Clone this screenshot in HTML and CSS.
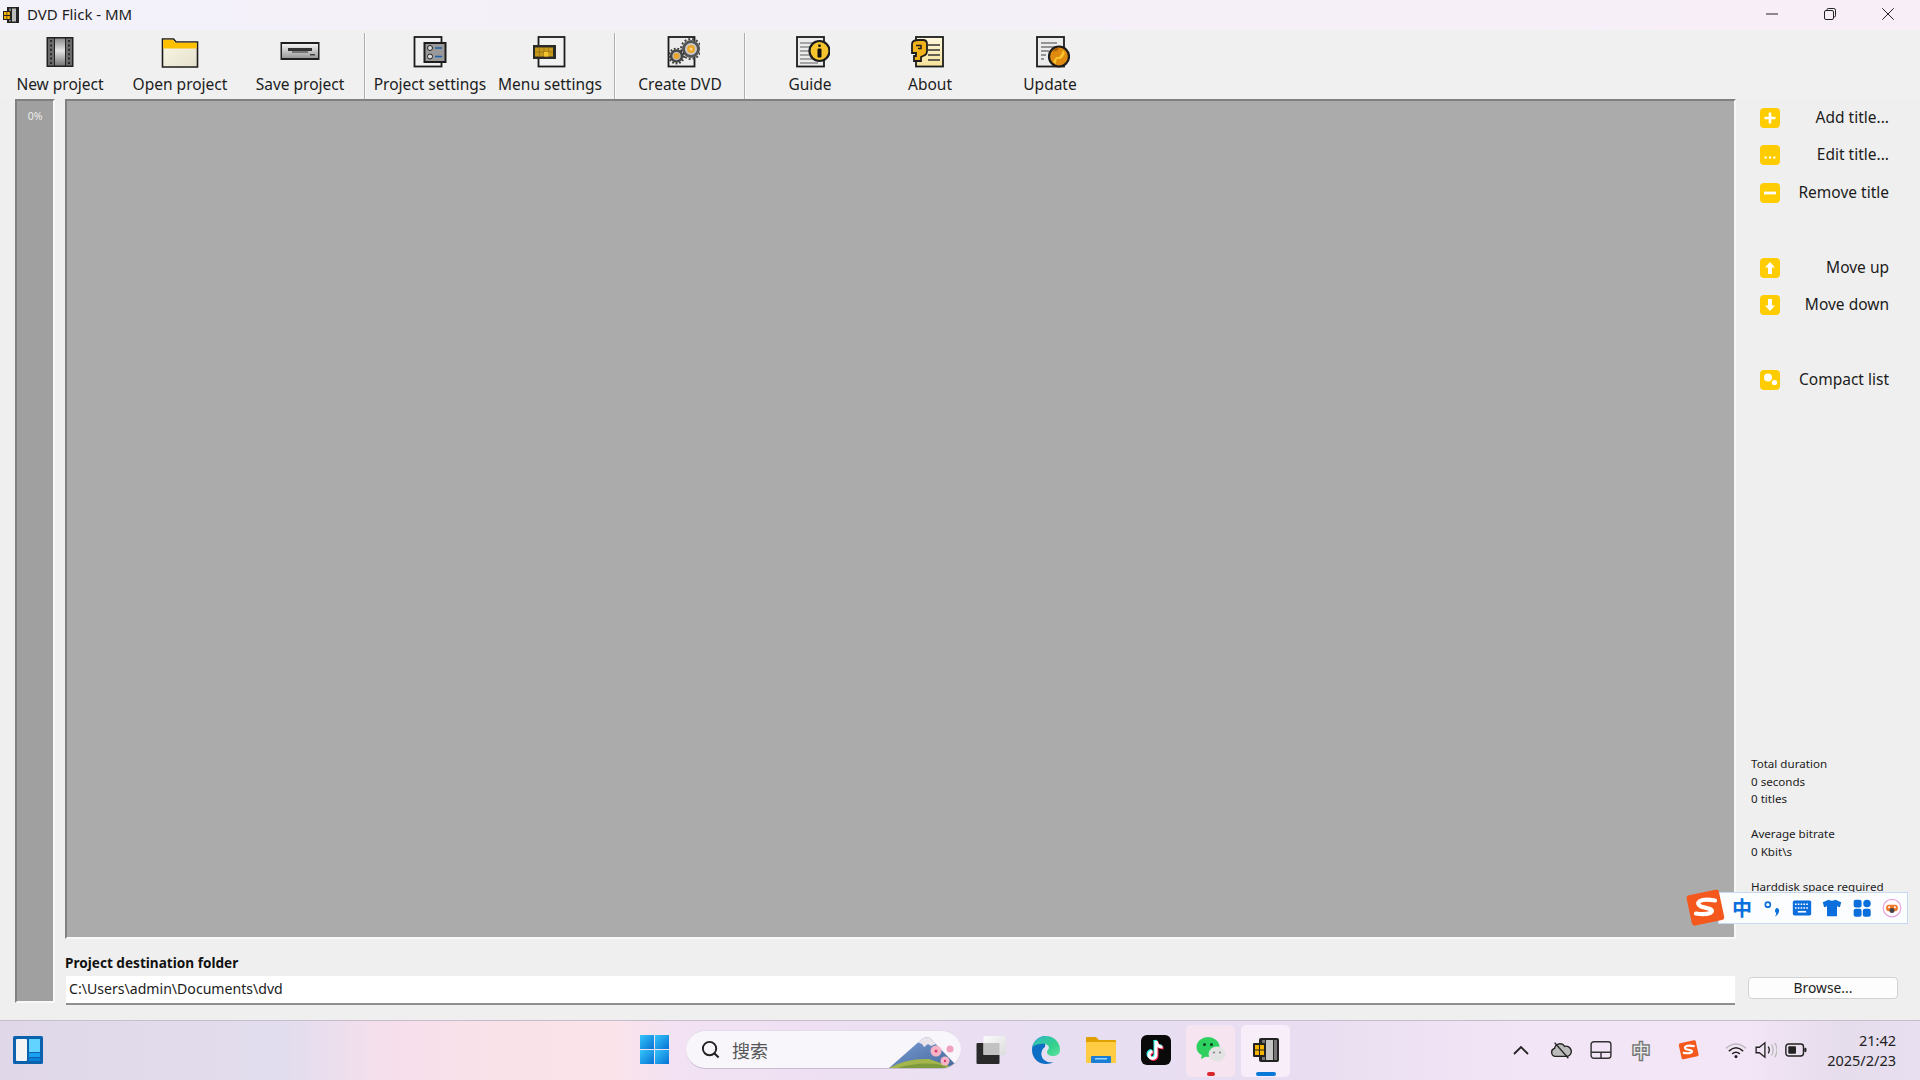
FILE: index.html
```html
<!DOCTYPE html>
<html lang="en">
<head>
<meta charset="utf-8">
<title>DVD Flick - MM</title>
<link rel="stylesheet" href="styles.css">
</head>
<body>
<svg class="defs" width="0" height="0" aria-hidden="true">
  <defs>
    <linearGradient id="filmg" x1="0" y1="0" x2="0" y2="1"><stop offset="0" stop-color="#8c8c8c"/><stop offset=".45" stop-color="#e4e4e4"/><stop offset="1" stop-color="#777"/></linearGradient>
    <linearGradient id="creamg" x1="0" y1="0" x2="1" y2="1"><stop offset="0" stop-color="#fbf8e8"/><stop offset="1" stop-color="#e4e0cc"/></linearGradient>
    <linearGradient id="driveg" x1="0" y1="0" x2="0" y2="1"><stop offset="0" stop-color="#f2f2f2"/><stop offset="1" stop-color="#9a9a9a"/></linearGradient>
    <linearGradient id="aboutg" x1="0" y1="0" x2="0" y2="1"><stop offset="0" stop-color="#fff8dc"/><stop offset="1" stop-color="#f7e29a"/></linearGradient>
    <linearGradient id="edgeg" x1="0" y1="0" x2="1" y2="1"><stop offset="0" stop-color="#2fb8c8"/><stop offset=".6" stop-color="#34d08c"/><stop offset="1" stop-color="#5fe0a0"/></linearGradient>
    <linearGradient id="wing" x1="0" y1="0" x2="1" y2="1"><stop offset="0" stop-color="#36c5fb"/><stop offset="1" stop-color="#0672d4"/></linearGradient>
    <linearGradient id="taskw" x1="0" y1="0" x2="1" y2="1"><stop offset="0" stop-color="#fbfbfb"/><stop offset="1" stop-color="#dcdcdc"/></linearGradient>
    <linearGradient id="mtn" x1="0" y1="0" x2="1" y2="1"><stop offset="0" stop-color="#7aa0d8"/><stop offset="1" stop-color="#46689c"/></linearGradient>
    <symbol id="filmico" viewBox="0 0 28 32">
      <rect x="0.500" y="1" width="27" height="30" fill="#222"/>
      <rect x="2" y="2.500" width="6" height="27" fill="#6b6b6b"/>
      <rect x="20" y="2.500" width="6" height="27" fill="#6b6b6b"/>
      <rect x="9" y="2.500" width="10" height="27" fill="url(#filmg)"/>
      <path d="M5 4v24M23 4v24" stroke="#111" stroke-width="1.400" stroke-dasharray="2 2.400"/>
    </symbol>
  </defs>
</svg>

<div class="app">
  <header class="titlebar">
    <svg class="title-icon" viewBox="0 0 18 18">
      <rect x="5" y="1" width="12" height="16" fill="#222"/><rect x="7" y="2.500" width="2" height="13" fill="#888"/><rect x="10" y="2.500" width="4" height="13" fill="#bbb"/>
      <rect x="1" y="5" width="8" height="9" fill="#222"/><rect x="2" y="6" width="2.600" height="3" fill="#f5b400"/><rect x="5.200" y="6" width="2.600" height="3" fill="#f5b400"/><rect x="2" y="10" width="2.600" height="3" fill="#f5b400"/><rect x="5.200" y="10" width="2.600" height="3" fill="#f5b400"/>
    </svg>
    <span class="title-text">DVD Flick - MM</span>
    <div class="win-controls">
      <svg class="win-btn" viewBox="0 0 12 12"><path d="M0 6h12" stroke="#222" stroke-width="1"/></svg>
      <svg class="win-btn" viewBox="0 0 12 12"><rect x=".5" y="2.500" width="9" height="9" rx="1.500" fill="none" stroke="#222"/><path d="M3 2.200V1.600A1.200 1.200 0 0 1 4.200.5h5.600a1.700 1.700 0 0 1 1.700 1.700v5.600A1.200 1.200 0 0 1 10.200 9" fill="none" stroke="#222"/></svg>
      <svg class="win-btn" viewBox="0 0 12 12"><path d="M.3.3l11.400 11.400M11.700.3L.3 11.700" stroke="#222" stroke-width="1"/></svg>
    </div>
  </header>

  <nav class="toolbar">
    <button class="tool">
      <svg class="tool-icon" viewBox="0 0 40 32"><use href="#filmico" x="6" y="0" width="28" height="32"/></svg>
      <span>New project</span>
    </button>
    <button class="tool">
      <svg class="tool-icon" viewBox="0 0 40 32"><path d="M2.500 3h11l2.500 3h21.500v25h-35z" fill="url(#creamg)" stroke="#1c1c1c" stroke-width="1.600"/><path d="M3.300 3.800h9.800l2.500 3h21.100v5.700H3.300z" fill="#ffc000"/></svg>
      <span>Open project</span>
    </button>
    <button class="tool">
      <svg class="tool-icon" viewBox="0 0 40 32"><rect x="0.500" y="6" width="39" height="18" fill="#1f1f1f"/><rect x="2" y="8" width="36" height="14" fill="url(#driveg)"/><rect x="8" y="12" width="24" height="3" fill="#333"/><rect x="12" y="15" width="16" height="2" fill="#777"/><rect x="30" y="18" width="5" height="1.500" fill="#444"/></svg>
      <span>Save project</span>
    </button>
    <i class="sep"></i>
    <button class="tool">
      <svg class="tool-icon" viewBox="0 0 40 32"><rect x="4.500" y="1" width="27" height="29.500" fill="#f1f1f1" stroke="#1c1c1c" stroke-width="1.800"/><rect x="14.500" y="7" width="21" height="19" fill="#999" stroke="#1c1c1c" stroke-width="2"/><circle cx="20" cy="12" r="2.500" fill="#ddd" stroke="#222"/><circle cx="20" cy="20.500" r="2.500" fill="#ddd" stroke="#222"/><path d="M25 12h7M25 20.500h7" stroke="#1c5ea8" stroke-width="1.600"/></svg>
      <span>Project settings</span>
    </button>
    <button class="tool">
      <svg class="tool-icon" viewBox="0 0 40 32"><rect x="8.500" y="1" width="26" height="29.500" fill="#f1f1f1" stroke="#1c1c1c" stroke-width="1.800"/><rect x="3" y="9" width="23" height="14" fill="#2a2a2a"/><rect x="5" y="11.500" width="18" height="9" fill="#c89a1c"/><path d="M5 16h18M9.500 11.500v9M14 11.500v9M18.500 11.500v9" stroke="#8c6a10" stroke-width=".6"/><rect x="14" y="16" width="4.500" height="4.500" fill="#f6c42c"/></svg>
      <span>Menu settings</span>
    </button>
    <i class="sep"></i>
    <button class="tool">
      <svg class="tool-icon" viewBox="0 0 40 32"><rect x="8.500" y="1" width="26" height="29.500" fill="#ececec" stroke="#1c1c1c" stroke-width="1.800"/><circle cx="31" cy="13" r="7.500" fill="#ccc" stroke="#555" stroke-width="3" /><circle cx="31" cy="13" r="10" fill="none" stroke="#444" stroke-width="2" stroke-dasharray="2 2"/><circle cx="31" cy="13" r="4" fill="#eda52a"/><circle cx="31" cy="13" r="1.500" fill="#ffdd88"/><circle cx="16.500" cy="20" r="5.500" fill="#bbb" stroke="#444" stroke-width="2.500"/><circle cx="16.500" cy="20" r="7.500" fill="none" stroke="#333" stroke-width="1.800" stroke-dasharray="1.800 1.800"/><circle cx="16.500" cy="20" r="3" fill="#eda52a"/></svg>
      <span>Create DVD</span>
    </button>
    <i class="sep"></i>
    <button class="tool">
      <svg class="tool-icon" viewBox="0 0 40 32"><rect x="7" y="1" width="27" height="29.500" fill="#ececec" stroke="#1c1c1c" stroke-width="1.800"/><path d="M10 7h16M10 11h12M10 15h9M10 19h9M10 23h13M10 27h18" stroke="#8a8a8a" stroke-width="1.400"/><circle cx="29.500" cy="15" r="10" fill="#f6c42c" stroke="#1c1c1c" stroke-width="2.200"/><rect x="28.300" y="8.500" width="2.400" height="2.400" fill="#111"/><rect x="27.500" y="12.500" width="4" height="9" rx="1" fill="#111"/></svg>
      <span>Guide</span>
    </button>
    <button class="tool">
      <svg class="tool-icon" viewBox="0 0 40 32"><rect x="6" y="1" width="27" height="29.500" fill="url(#aboutg)" stroke="#1c1c1c" stroke-width="1.800"/><path d="M18 9h12M18 14h12M18 19h12M18 24h12" stroke="#333" stroke-width="1.500"/><path d="M9 4h4q4 0 4 4v7q0 4-4 5l-2 1v4H4v-5h2v-3H2v-9q0-4 7-4z" fill="#f2b21c" stroke="#1c1c1c" stroke-width="1.800"/><path d="M6 9.500h5v3H8" fill="none" stroke="#1c1c1c" stroke-width="1.500"/></svg>
      <span>About</span>
    </button>
    <button class="tool">
      <svg class="tool-icon" viewBox="0 0 40 32"><rect x="7" y="1" width="27" height="29.500" fill="#ececec" stroke="#1c1c1c" stroke-width="1.800"/><path d="M11 7h16M11 11h14M11 15h8M11 19h5M11 23h3" stroke="#777" stroke-width="1.500"/><circle cx="29" cy="20.500" r="10" fill="#e08a10" stroke="#1c1c1c" stroke-width="2.200"/><path d="M23 26q3-6 5-5t5-7l2 3q-3 7-6 6t-3 5z" fill="#f6c42c"/><path d="M23 16q2-4 6-5l-1 3z" fill="#a85c08"/></svg>
      <span>Update</span>
    </button>
  </nav>

  <main class="content">
    <div class="progress"><span class="progress-text">0%</span></div>
    <section class="center">
      <div class="listing"></div>
      <label class="dest-label">Project destination folder</label>
      <div class="dest-input">C:\Users\admin\Documents\dvd</div>
    </section>
    <aside class="side">
      <div class="side-list">
        <button class="side-btn"><svg class="side-icon" viewBox="0 0 20 20"><rect width="20" height="20" rx="4" fill="#ffcc00"/><path d="M10 4.500v11M4.500 10h11" stroke="#fff" stroke-width="2.600"/></svg><span>Add title...</span></button>
        <button class="side-btn"><svg class="side-icon" viewBox="0 0 20 20"><rect width="20" height="20" rx="4" fill="#ffcc00"/><path d="M4.500 12.500h2.200M8.900 12.500h2.200M13.300 12.500h2.200" stroke="#fff" stroke-width="2.200"/></svg><span>Edit title...</span></button>
        <button class="side-btn"><svg class="side-icon" viewBox="0 0 20 20"><rect width="20" height="20" rx="4" fill="#ffcc00"/><path d="M4 10h12" stroke="#fff" stroke-width="2.800"/></svg><span>Remove title</span></button>
        <div class="side-gap"></div>
        <button class="side-btn"><svg class="side-icon" viewBox="0 0 20 20"><rect width="20" height="20" rx="4" fill="#ffcc00"/><path d="M10 4l5 5.500h-3V16H8V9.500H5z" fill="#fff"/></svg><span>Move up</span></button>
        <button class="side-btn"><svg class="side-icon" viewBox="0 0 20 20"><rect width="20" height="20" rx="4" fill="#ffcc00"/><path d="M10 16l5-5.500h-3V4H8v6.500H5z" fill="#fff"/></svg><span>Move down</span></button>
        <div class="side-gap"></div>
        <button class="side-btn"><svg class="side-icon" viewBox="0 0 20 20"><rect width="20" height="20" rx="4" fill="#ffcc00"/><circle cx="8" cy="7.500" r="4" fill="#fff"/><circle cx="14.500" cy="12.500" r="2.600" fill="#fff"/></svg><span>Compact list</span></button>
      </div>
      <div class="stats">
        <p>Total duration</p><p>0 seconds</p><p>0 titles</p><p>&nbsp;</p>
        <p>Average bitrate</p><p>0 Kbit\s</p><p>&nbsp;</p>
        <p>Harddisk space required</p><p>2156 KB</p>
      </div>
      <button class="browse">Browse...</button>
    </aside>

    <div class="ime">
      <svg class="ime-logo" viewBox="0 0 40 38"><rect x="3" y="3" width="33" height="31" rx="3" fill="#f4581c" transform="rotate(-12 20 19)"/><path d="M29 11.500q-11-2-15 .5q-4 3 1 5.500l9 2.500q4 2 0 4q-5 2-14 .5" fill="none" stroke="#fff" stroke-width="4.200" stroke-linecap="round"/></svg>
      <div class="ime-bar">
        <span class="ime-zh">中</span>
        <svg class="ime-icon" viewBox="0 0 24 24"><circle cx="7" cy="8" r="3" fill="none" stroke="#0a6fdc" stroke-width="2"/><path d="M17 12q4 0 3.500 4t-5 6.500q2-3 1.500-4.500-3-2 0-6z" fill="#0a6fdc"/></svg>
        <svg class="ime-icon" viewBox="0 0 24 24"><rect x="1" y="3" width="22" height="18" rx="2" fill="#0a6fdc"/><path d="M3.500 7.500h17M3.500 12h17" stroke="#fff" stroke-width="2" stroke-dasharray="2 1.400"/><path d="M7 16.500h10" stroke="#fff" stroke-width="2"/></svg>
        <svg class="ime-icon" viewBox="0 0 24 24"><path d="M8 2q4 2.500 8 0l7 3-1.500 6-3.500-1v12H6V10l-3.500 1L1 5z" fill="#0a6fdc"/></svg>
        <svg class="ime-icon" viewBox="0 0 24 24"><rect x="2" y="2" width="9.500" height="9.500" rx="2.500" fill="#0a6fdc"/><rect x="13.500" y="2" width="9" height="9" rx="4.500" fill="#0a6fdc"/><rect x="2" y="13" width="9.500" height="9.500" rx="2.500" fill="#0a6fdc"/><rect x="13" y="13" width="9.500" height="9.500" rx="2.500" fill="#0a6fdc"/></svg>
        <svg class="ime-icon" viewBox="0 0 24 24"><circle cx="12" cy="12" r="10.500" fill="#fff" stroke="#e7a6e0" stroke-width="1.500"/><rect x="5" y="8" width="14" height="8" rx="3" fill="#f47a2c"/><circle cx="12" cy="15" r="3" fill="#444"/><circle cx="8.500" cy="11" r="1.200" fill="#fff"/><circle cx="15.500" cy="11" r="1.200" fill="#fff"/></svg>
      </div>
    </div>
  </main>

  <footer class="taskbar">
    <svg class="widgets" viewBox="0 0 30 28"><rect width="30" height="28" rx="1.500" fill="#0c62ad"/><rect x="3" y="3" width="11" height="22" rx="1" fill="#f4f4f4"/><rect x="16" y="3" width="11" height="13" fill="#62d2ff"/><rect x="16" y="17" width="11" height="4" fill="#1aa0f0"/><rect x="16" y="22" width="11" height="3" fill="#0a80d8"/></svg>
    <svg class="winlogo" viewBox="0 0 29 29"><rect width="14" height="14" fill="url(#wing)"/><rect x="15" width="14" height="14" fill="url(#wing)"/><rect y="15" width="14" height="14" fill="url(#wing)"/><rect x="15" y="15" width="14" height="14" fill="url(#wing)"/></svg>
    <div class="search">
      <svg class="search-ico" viewBox="0 0 22 22"><circle cx="10" cy="10" r="7" fill="none" stroke="#222" stroke-width="2"/><path d="M15 15l4.500 4.500" stroke="#222" stroke-width="2.200"/></svg>
      <span class="search-text">搜索</span>
      <svg class="search-art" viewBox="0 0 70 36"><path d="M0 36L33 7q4-3 8-1l25 26v4z" fill="url(#mtn)"/><path d="M29 10.500L33 7q4-3 8-1l6 6-5 2-3-2-4 3-2-3z" fill="#e8e4ea"/><path d="M0 36q18-10 40-9l26 9z" fill="#a3b64c"/><path d="M8 36q20-6 40-4l14 4z" fill="#7d9a3c"/><circle cx="47" cy="19" r="5.500" fill="#f6b4c8"/><circle cx="47" cy="19" r="1.500" fill="#d6406a"/><circle cx="61" cy="17" r="3.500" fill="#f0a0bc"/><circle cx="56" cy="29" r="4.500" fill="#f6b4c8"/><circle cx="56" cy="29" r="1.200" fill="#d6406a"/></svg>
    </div>
    <div class="slot">
      <svg class="task-ico" viewBox="0 0 30 30"><rect x=".5" y="8" width="23" height="21" rx="1" fill="#2a2a2a"/><rect x="7.500" y="1" width="22.500" height="19" rx="1" fill="url(#taskw)"/><rect x="7.500" y="8" width="16" height="12" fill="#c2c2c2"/></svg>
    </div>
    <div class="slot">
      <svg class="task-ico" viewBox="0 0 30 30"><path d="M15 1A14 14 0 0 0 1 15c0 8 6 14 14 14 3 0 5.500-1 7.500-2-5 1-10-1-11.500-5-1.500-4 0-8 3-10z" fill="#0c6fc4"/><path d="M1.500 12C3 5 9 1 15 1a14 14 0 0 1 14 14c0 4-3 6-7 6-4 0-6-2-6-4 0-2 2-3 2-4 0-3-4-5-8-4-4 0-8 2-9.500 4z" fill="url(#edgeg)"/></svg>
    </div>
    <div class="slot">
      <svg class="task-ico" viewBox="0 0 30 30"><path d="M0 3q0-1 1-1h9l3 3h16q1 0 1 1v4H0z" fill="#e0a100"/><rect y="7" width="30" height="21" rx="1" fill="#ffcc44"/><rect x="5" y="21" width="20" height="7" rx="1" fill="#1a7fd4"/><rect x="9" y="23" width="12" height="1.500" fill="#9bd4ff"/></svg>
    </div>
    <div class="slot">
      <svg class="task-ico" viewBox="0 0 30 30"><rect width="30" height="30" rx="6" fill="#0a0a0a"/><path d="M15 6v14a3.500 3.500 0 1 1-3.500-3.500" fill="none" stroke="#25f4ee" stroke-width="3" transform="translate(-1 -1)"/><path d="M15 6c.5 4 3 6 6.500 6" fill="none" stroke="#25f4ee" stroke-width="3" transform="translate(-1 -1)"/><path d="M15 6v14a3.500 3.500 0 1 1-3.500-3.500" fill="none" stroke="#fe2c55" stroke-width="3" transform="translate(1 1)"/><path d="M15 6c.5 4 3 6 6.500 6" fill="none" stroke="#fe2c55" stroke-width="3" transform="translate(1 1)"/><path d="M15 6v14a3.500 3.500 0 1 1-3.500-3.500" fill="none" stroke="#fff" stroke-width="3"/><path d="M15 6c.5 4 3 6 6.500 6" fill="none" stroke="#fff" stroke-width="3"/></svg>
    </div>
    <div class="slot slot-on slot-red">
      <svg class="task-ico" viewBox="0 0 30 30"><ellipse cx="12" cy="12" rx="11.500" ry="10" fill="#2ed05f"/><path d="M6 19l-1 5 6-3z" fill="#2ed05f"/><circle cx="8.500" cy="9.500" r="1.500" fill="#0d4020"/><circle cx="15.500" cy="9.500" r="1.500" fill="#0d4020"/><ellipse cx="21" cy="19" rx="8.500" ry="7.500" fill="#e2e2e2"/><circle cx="18" cy="17.500" r="1.100" fill="#888"/><circle cx="24" cy="17.500" r="1.100" fill="#888"/></svg>
    </div>
    <div class="slot slot-on slot-blue">
      <svg class="task-ico" viewBox="0 0 30 30"><rect x="8" y="3" width="20" height="24" rx="2" fill="#222"/><rect x="11" y="5" width="3" height="20" fill="#777"/><rect x="15" y="5" width="7" height="20" fill="#c4c4c4"/><rect x="23" y="5" width="3" height="20" fill="#777"/><rect x="2" y="8" width="13" height="14" rx="1" fill="#222"/><rect x="4" y="10" width="4" height="4.500" fill="#f5b400"/><rect x="9" y="10" width="4" height="4.500" fill="#f5b400"/><rect x="4" y="15.500" width="4" height="4.500" fill="#f5b400"/><rect x="9" y="15.500" width="4" height="4.500" fill="#f5b400"/></svg>
    </div>

    <div class="tray">
      <div class="tray-cell"><svg class="tray-ico" viewBox="0 0 20 20"><path d="M3 14l7-7 7 7" fill="none" stroke="#222" stroke-width="1.800"/></svg></div>
      <div class="tray-cell"><svg class="tray-ico tray-lg" viewBox="0 0 24 20"><path d="M6 17a4.500 4.500 0 0 1-1-8.800A6 6 0 0 1 16 6a4.500 4.500 0 0 1 3 11z" fill="#bbb" stroke="#222" stroke-width="1.500"/><path d="M5 2l15 17" stroke="#222" stroke-width="1.500"/></svg></div>
      <div class="tray-cell"><svg class="tray-ico tray-lg" viewBox="0 0 20 18"><rect x="1" y="1.500" width="18" height="15" rx="2.500" fill="none" stroke="#333" stroke-width="1.300"/><path d="M1 11h18M10 11v5.500" stroke="#333" stroke-width="1.300"/></svg></div>
      <div class="tray-cell"><span class="tray-zh">中</span></div>
      <div class="tray-cell tray-s"><svg class="tray-ico tray-lg" viewBox="0 0 40 38"><rect x="3" y="3" width="33" height="31" rx="3" fill="#f4581c" transform="rotate(-12 20 19)"/><path d="M29 11.500q-11-2-15 .5q-4 3 1 5.500l9 2.500q4 2 0 4q-5 2-14 .5" fill="none" stroke="#fff" stroke-width="4.200" stroke-linecap="round"/></svg></div>
      <div class="net">
        <svg class="tray-ico tray-lg" viewBox="0 0 20 16"><path d="M1 6.500q9-8 18 0" fill="none" stroke="#bbb" stroke-width="1.300"/><path d="M3.500 9q6.500-6 13 0" fill="none" stroke="#222" stroke-width="1.400"/><path d="M6.500 11.500q3.500-3 7 0" fill="none" stroke="#222" stroke-width="1.400"/><circle cx="10" cy="14" r="1.400" fill="#222"/></svg>
        <svg class="tray-ico tray-lg" viewBox="0 0 20 16"><path d="M1 5.500h3l5-4v13l-5-4H1z" fill="none" stroke="#222" stroke-width="1.200"/><path d="M12 5q2 3 0 6" fill="none" stroke="#222" stroke-width="1.200"/><path d="M15 3q3 5 0 10M18 1.500q4 6.500 0 13" fill="none" stroke="#bbb" stroke-width="1.200"/></svg>
        <svg class="tray-ico tray-lg" viewBox="0 0 20 16"><rect x=".8" y="2.500" width="16" height="11" rx="2.500" fill="none" stroke="#222" stroke-width="1.300"/><rect x="3" y="4.700" width="7" height="6.600" rx=".8" fill="#222"/><rect x="17.500" y="6" width="2" height="4" rx="1" fill="#222"/></svg>
      </div>
      <div class="clock"><span>21:42</span><span>2025/2/23</span></div>
    </div>
  </footer>
</div>
</body>
</html>
```

FILE: styles.css
```css
* { box-sizing: border-box; }
html, body { margin: 0; padding: 0; width: 1920px; height: 1080px; overflow: hidden; }
body { font-family: "Noto Sans", "Noto Sans CJK SC", sans-serif; color: #1c1c1c; background: #f0f0f0; }
button { font: inherit; color: inherit; background: none; border: 0; padding: 0; margin: 0; }
p { margin: 0; }
.defs { display: block; height: 0; width: 0; }

.app { width: 1920px; height: 1080px; display: flex; flex-direction: column; }

.titlebar { height: 30px; flex: none; display: flex; align-items: center; padding-left: 2px;
  background: linear-gradient(90deg, #f3f1f9 0%, #f4f0f8 50%, #f8eef8 100%); }
.title-icon { width: 18px; height: 18px; }
.title-text { font-size: 15px; line-height: 20px; margin: -2px 0 0 7px; }
.win-controls { margin-left: auto; display: flex; gap: 46px; padding-right: 26px; }
.win-btn { width: 12px; height: 12px; display: block; margin-top: -2px; }

.toolbar { height: 69px; flex: none; display: flex; align-items: stretch; background: #f0f0f0; }
.tool { width: 120px; display: flex; flex-direction: column; align-items: center; padding-top: 6px; }
.tool-icon { width: 40px; height: 32px; display: block; }
.tool span { font-size: 15.500px; line-height: 20px; margin-top: 6px; white-space: nowrap; }
.sep { width: 2px; margin: 3px 4px 0; background: linear-gradient(90deg, #aeaeae 50%, #fbfbfb 50%); }

.content { flex: 1; position: relative; display: flex; background: #efefef; }
.progress { width: 40px; height: 904px; margin-left: 15px; background: #a0a0a0;
  border: 2px solid; border-color: #808080 #f8f8f8 #f8f8f8 #808080; text-align: center; }
.progress-text { display: block; color: #ececec; font-size: 10.500px; line-height: 12px; margin-top: 9px; }

.center { width: 1671px; margin-left: 10px; display: flex; flex-direction: column; }
.listing { height: 840px; background: #ababab; border: 2px solid; border-color: #808080 #f8f8f8 #f8f8f8 #808080; }
.dest-label { font-size: 13.600px; font-weight: 700; line-height: 18px; margin-top: 15px; color: #111; }
.dest-input { height: 29px; margin: 4px 1px 0; background: #fff; border-bottom: 2px solid #8f8f8f;
  font-size: 14.100px; line-height: 26px; padding-left: 3px; }

.side { width: 184px; display: flex; flex-direction: column; }
.side-list { display: grid; grid-auto-rows: 37.500px; padding-left: 24px; width: 153px; }
.side-btn { display: flex; align-items: center; justify-content: space-between; }
.side-btn span { font-size: 15.500px; line-height: 20px; margin-top: -2px; }
.side-icon { width: 20px; height: 20px; display: block; }

.stats { margin: 356px 0 0 15px; font-size: 11.600px; line-height: 17.600px; }
.browse { margin: 64px 0 0 12px; width: 150px; height: 22px; background: #fdfdfd; border: 1px solid #d2d2d2;
  border-radius: 4px; font-size: 13.800px; line-height: 18px; }

.ime { position: absolute; left: 1686px; top: 790px; display: flex; align-items: center; }
.ime-logo { width: 40px; height: 38px; position: relative; z-index: 1; flex: none; }
.ime-bar { margin-left: -8px; width: 190px; height: 32px; background: #fbfdff; border: 1px solid #c4d8f0;
  display: flex; align-items: center; padding-left: 13px; gap: 10px; }
.ime-zh { font-family: "Noto Sans CJK SC", sans-serif; font-size: 20px; font-weight: 700; color: #0a6fdc; width: 20px; line-height: 24px; }
.ime-icon { width: 20px; height: 20px; flex: none; }

.taskbar { height: 60px; flex: none; display: flex; align-items: center; padding-bottom: 2px; border-top: 1px solid #c6bccb;
  background: linear-gradient(90deg, #e0d8e8 0%, #e2ddee 15%, #f6dfec 20%, #f9e2e8 26%, #fbe3ea 32%, #f2e2f3 35%, #e8def2 55%, #e9def1 68%, #f2e6f6 80%, #f3e6f6 91%, #e5dcec 96%, #e8dff0 100%); }
.widgets { width: 30px; height: 28px; margin-left: 13px; flex: none; }
.winlogo { width: 29px; height: 29px; margin-left: 597px; flex: none; }
.search { width: 275px; height: 39px; margin: 0 2px 0 17px; flex: none; display: flex; align-items: center; position: relative;
  background: #f8f5fb; border-radius: 20px; border-bottom: 1px solid #c8bcd0; border-top: 1px solid #e4dcec; overflow: hidden; }
.search-ico { width: 21px; height: 21px; margin-left: 14px; flex: none; }
.search-text { font-size: 18px; color: #555; margin-left: 11px; }
.search-art { position: absolute; right: 2px; bottom: 0; width: 70px; height: 36px; }
.slot { width: 55px; height: 50px; flex: none; display: flex; align-items: center; justify-content: center; position: relative; }
.task-ico { width: 30px; height: 30px; display: block; }
.slot-on::before { content: ""; position: absolute; left: 3px; right: 3px; top: 0; bottom: -2px; border-radius: 5px; }
.slot-red::before { background: #f6e4f0; }
.slot-blue::before { background: #f7eef9; }
.slot-on .task-ico { position: relative; }
.slot-on::after { content: ""; position: absolute; bottom: -1px; height: 4px; border-radius: 2px; left: 50%; transform: translateX(-50%); }
.slot-red::after { width: 8px; background: #d8262c; }
.slot-blue::after { width: 20px; background: #0a78d8; }

.tray { margin-left: auto; display: flex; align-items: center; padding-right: 24px; }
.tray-cell { width: 40px; display: flex; justify-content: center; align-items: center; }
.tray-s { width: 56px; }
.tray-ico { width: 20px; height: 20px; display: block; }
.tray-lg { width: 22px; height: 20px; }
.tray-zh { font-family: "Noto Sans CJK SC", sans-serif; font-size: 18px; color: #ececec; -webkit-text-stroke: 3px #777; paint-order: stroke fill; line-height: 22px; }
.net { margin-left: 4px; display: grid; grid-template-columns: repeat(3, 30px); justify-items: center; }
.clock { width: 85px; display: flex; flex-direction: column; align-items: flex-end; font-size: 14.500px; line-height: 20px; color: #222; }
```
